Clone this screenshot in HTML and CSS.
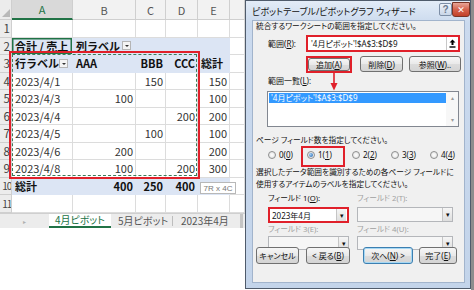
FILE: index.html
```html
<!DOCTYPE html>
<html lang="ja">
<head>
    <meta charset="UTF-8">
    <title>ピボットテーブル ウィザード</title>
    <link rel="stylesheet" href="styles.css">
</head>
<body>
<div class="screen">

    <div class="excel">
        <div class="sheet">
            <div class="row head">
                <div class="rh corner"><span class="tri"></span></div>
                <div class="ch sel">A</div><div class="ch">B</div><div class="ch">C</div><div class="ch">D</div><div class="ch">E</div><div class="ch"></div>
            </div>
            <div class="row">
                <div class="rh">1</div><div class="c"></div><div class="c"></div><div class="c"></div><div class="c"></div><div class="c"></div><div class="c"></div>
            </div>
            <div class="row">
                <div class="rh">2</div>
                <div class="c pv b active">合計 / 売上</div>
                <div class="c pv b">列ラベル<span class="filter"></span></div>
                <div class="c pv"></div><div class="c pv"></div><div class="c pv"></div><div class="c"></div>
            </div>
            <div class="row">
                <div class="rh">3</div>
                <div class="c pv b">行ラベル<span class="filter"></span></div>
                <div class="c pv b">AAA</div>
                <div class="c pv b n">BBB</div>
                <div class="c pv b n">CCC</div>
                <div class="c pv b">総計</div><div class="c"></div>
            </div>
            <div class="row">
                <div class="rh">4</div><div class="c">2023/4/1</div><div class="c n"></div><div class="c n">150</div><div class="c n"></div><div class="c n">150</div><div class="c"></div>
            </div>
            <div class="row">
                <div class="rh">5</div><div class="c">2023/4/3</div><div class="c n">100</div><div class="c n"></div><div class="c n"></div><div class="c n">100</div><div class="c"></div>
            </div>
            <div class="row">
                <div class="rh">6</div><div class="c">2023/4/4</div><div class="c n"></div><div class="c n"></div><div class="c n">200</div><div class="c n">200</div><div class="c"></div>
            </div>
            <div class="row">
                <div class="rh">7</div><div class="c">2023/4/5</div><div class="c n"></div><div class="c n">100</div><div class="c n"></div><div class="c n">100</div><div class="c"></div>
            </div>
            <div class="row">
                <div class="rh">8</div><div class="c">2023/4/6</div><div class="c n">200</div><div class="c n"></div><div class="c n"></div><div class="c n">200</div><div class="c"></div>
            </div>
            <div class="row">
                <div class="rh">9</div><div class="c">2023/4/8</div><div class="c n">100</div><div class="c n"></div><div class="c n">200</div><div class="c n">300</div><div class="c"></div>
            </div>
            <div class="row">
                <div class="rh wide">10</div>
                <div class="c pv b">総計</div><div class="c pv b n">400</div><div class="c pv b n">250</div><div class="c pv b n">400</div><div class="c pv b n"></div><div class="c"></div>
            </div>
            <div class="row">
                <div class="rh wide">11</div><div class="c"></div><div class="c"></div><div class="c"></div><div class="c"></div><div class="c"></div><div class="c"></div>
            </div>

            <!-- annotations over the grid -->
            <div class="marquee"></div>
            <div class="ants"></div>
            <div class="tip">7R x 4C</div>
        </div>

        <div class="tabs">
            <div class="tab-nav">&#9656;</div>
            <div class="tab on">4月ピボット</div>
            <div class="tab second">5月ピボット</div>
            <div class="tab third">2023年4月</div>
        </div>
    </div>

    <div class="dialog">
        <div class="titlebar">
            <span class="title">ピボットテーブル/ピボットグラフ ウィザード</span>
            <span class="help">?</span>
            <span class="close">✕</span>
        </div>

        <div class="panel">
            <p class="msg">統合するワークシートの範囲を指定してください。</p>

            <div class="range">
                <label>範囲(<u>R</u>):</label>
                <div class="input red">
                    <span class="val">'4月ピボット'!$A$3:$D$9</span>
                    <span class="pick">
                        <svg width="7" height="9" viewBox="0 0 7 9"><path d="M3.5 0.5 L6.5 3.5 H4.5 V6 H2.5 V3.5 H0.5 Z" fill="#000"/><rect x="0.5" y="7.3" width="6" height="1.4" fill="#000"/></svg>
                    </span>
                </div>
            </div>

            <div class="btns">
                <span class="red btn-mark"><button>追加(<u>A</u>)</button></span>
                <button class="w43">削除(<u>D</u>)</button>
                <button class="w52">参照(<u>W</u>)..</button>
            </div>

            <label class="lbl-list">範囲一覧(<u>L</u>):</label>
            <div class="list">
                <div class="items"><div class="item on">'4月ピボット'!$A$3:$D$9</div></div>
                <div class="vscroll"><span>&#9652;</span><span>&#9662;</span></div>
            </div>

            <p class="msg msg2">ページ フィールド数を指定してください。</p>
            <div class="radios">
                <span class="opt w39"><i class="radio"></i><span>0(<u>0</u>)</span></span>
                <span class="opt w45 picked"><i class="radio on"></i><span>1(<u>1</u>)</span></span>
                <span class="opt w39"><i class="radio"></i><span>2(<u>2</u>)</span></span>
                <span class="opt w39"><i class="radio"></i><span>3(<u>3</u>)</span></span>
                <span class="opt"><i class="radio"></i><span>4(<u>4</u>)</span></span>
            </div>

            <p class="msg msg3">選択したデータ範囲を識別するための各ページ フィールドに<br>使用するアイテムのラベルを指定してください。</p>

            <div class="fields">
                <label>フィールド 1(<u>O</u>):</label>
                <label class="off">フィールド 2(T):</label>
                <div class="combo red"><span class="val">2023年4月</span><span class="drop">&#9662;</span></div>
                <div class="combo dis"><span class="val"></span><span class="drop">&#9662;</span></div>
                <label class="off lbl2">フィールド 3(E):</label>
                <label class="off lbl2">フィールド 4(U):</label>
                <div class="combo dis short"><span class="val"></span><span class="drop">&#9662;</span></div>
                <div class="combo dis short"><span class="val"></span><span class="drop">&#9662;</span></div>
            </div>

            <div class="footer">
                <button class="w43">キャンセル</button>
                <button class="w44">&lt; 戻る(<u>B</u>)</button>
                <button class="w50 focus">次へ(<u>N</u>) &gt;</button>
                <button class="w38">完了(<u>E</u>)</button>
            </div>

            <svg class="arrow" width="8" height="19" viewBox="0 0 8 19">
                <line x1="4" y1="0" x2="4" y2="13" stroke="#e0202a" stroke-width="1.6"/>
                <path d="M0.5 11 L7.5 11 L4 18.5 Z" fill="#e0202a"/>
            </svg>
        </div>
    </div>

    <div class="edge"></div>
</div>
</body>
</html>
```

FILE: styles.css
```css
*{
    box-sizing: border-box;
}

body{
    margin: 0;
    width: 474px;
    height: 290px;
    overflow: hidden;
    background-color: white;
    font-family: "Noto Sans CJK JP", "Noto Sans", sans-serif;
}

.screen{
    display: flex;
    height: 290px;
}

/* ---------- spreadsheet ---------- */

.excel{
    width: 245px;
    flex: none;
    overflow: hidden;
}

.sheet{
    position: relative;
}

.row{
    display: grid;
    grid-template-columns: 12px 61px 63px 30px 32px 32px 15px;
    height: 17.5px;
}

.row.head{
    height: 20px;
}

.rh, .ch{
    background-color: #ececec;
    color: #555;
    font-size: 11px;
    display: flex;
    align-items: center;
    border-right: 1px solid #cfcfcf;
    border-bottom: 1px solid #cfcfcf;
    overflow: hidden;
}

.ch{
    justify-content: center;
    background-color: #f2f2f2;
}

.ch.sel{
    background-color: #d9d9d9;
    color: #217346;
    border-bottom: 2px solid #217346;
}

.rh{
    justify-content: flex-end;
    padding-right: 1px;
    font-size: 11.5px;
    color: #444;
}

.rh.wide{
    font-size: 10px;
    letter-spacing: -1.2px;
    padding-right: 0;
}

.corner{
    position: relative;
}

.tri{
    position: absolute;
    right: 1px;
    bottom: 2px;
    border-left: 8px solid transparent;
    border-bottom: 8px solid #b9b9b9;
}

.c{
    font-size: 11px;
    color: #333;
    display: flex;
    align-items: center;
    padding: 0 2px 0 3px;
    white-space: nowrap;
    border-right: 1px solid #dcdcdc;
    border-bottom: 1px solid #dcdcdc;
}

.c.n{
    justify-content: flex-end;
}

.c.b{
    font-weight: bold;
    color: #111;
}

.c.pv{
    background-color: #dce5f4;
    border-color: #dce5f4;
}

.c.active{
    box-shadow: inset 0 0 0 1.5px #217346;
}

.filter{
    width: 9px;
    height: 9px;
    margin-left: auto;
    margin-right: 2px;
    background-color: #f4f4f4;
    border: 1px solid #b5b5b5;
    position: relative;
}

.filter::after{
    content: "";
    position: absolute;
    left: 2px;
    top: 3px;
    border-left: 2px solid transparent;
    border-right: 2px solid transparent;
    border-top: 2px solid #333;
}

.marquee{
    position: absolute;
    left: 9px;
    top: 51px;
    width: 191px;
    height: 128px;
    border: 2px solid #e0202a;
}

.ants{
    position: absolute;
    left: 12px;
    top: 54px;
    width: 185px;
    height: 122px;
    border: 1.5px dashed #3c7a57;
}

.tip{
    position: absolute;
    left: 200px;
    top: 182px;
    width: 36px;
    height: 12px;
    background-color: white;
    border: 1px solid #b8b8b8;
    font-family: "Liberation Sans", sans-serif;
    font-size: 8px;
    color: #777;
    display: flex;
    align-items: center;
    justify-content: center;
}

.tabs{
    display: flex;
    align-items: stretch;
    height: 15px;
    margin-top: 0.5px;
    background-color: #ececec;
    border-top: 1px solid #cfcfcf;
    font-size: 10px;
    font-feature-settings: "palt";
    color: #555;
    white-space: nowrap;
}

.tab-nav{
    width: 49px;
    flex: none;
    font-size: 6px;
    color: #b0b0b0;
    display: flex;
    align-items: center;
    justify-content: center;
}

.tab{
    display: flex;
    align-items: center;
    flex: none;
    line-height: 1;
}

.tab.on{
    width: 62px;
    background-color: white;
    color: #217346;
    border-bottom: 2px solid #217346;
    justify-content: center;
}

.tab.second{
    width: 62px;
    padding-left: 7px;
    border-right: 1px solid #bdbdbd;
    margin: 2px 0;
}

.tab.third{
    width: 70px;
    padding-left: 8px;
    border-right: 3px solid #c4c4c4;
}

/* ---------- dialog ---------- */

.dialog{
    width: 226px;
    height: 289px;
    flex: none;
    border: 1px solid #4f5b6b;
    background: linear-gradient(#e3ecf7, #cbdaee 22px, #c3d4ea);
    padding: 0 5px 0 6px;
    font-family: "Noto Sans", "Noto Sans CJK JP", sans-serif;
    font-size: 7.7px;
    font-feature-settings: "palt";
    color: #111;
}

.edge{
    flex: 1;
    background-color: #8d8d8d;
}

.titlebar{
    height: 19px;
    display: flex;
    align-items: flex-start;
}

.title{
    font-size: 9px;
    margin-top: 4px;
    white-space: nowrap;
}

.help{
    margin-left: auto;
    margin-top: 2px;
    width: 13px;
    height: 13px;
    border: 1px solid #7d8ea6;
    border-radius: 2px;
    background: linear-gradient(#eef3fa, #c9d6e8);
    color: #6b7a90;
    font-family: "Liberation Sans", sans-serif;
    font-weight: bold;
    font-size: 10px;
    display: flex;
    align-items: center;
    justify-content: center;
}

.close{
    width: 18px;
    height: 15px;
    margin-top: 1px;
    margin-right: -5px;
    border: 1px solid #7a3426;
    border-radius: 0 0 3px 3px;
    background: linear-gradient(#e8a597, #d5634d 50%, #c24028);
    color: white;
    font-family: "DejaVu Sans", sans-serif;
    font-weight: bold;
    font-size: 9px;
    display: flex;
    align-items: center;
    justify-content: center;
}

.panel{
    position: relative;
    height: 263px;
    background-color: #f0f0f0;
    border: 1px solid #a2b4cc;
}

.msg{
    margin: 0 0 0 3px;
    height: 10px;
    line-height: 10px;
    white-space: nowrap;
}

label{
    display: block;
    white-space: nowrap;
    line-height: 10px;
}

u{
    text-decoration-thickness: 0.5px;
    text-underline-offset: 1px;
}

.range{
    display: flex;
    align-items: center;
    margin-top: 4px;
    height: 17px;
    padding-left: 15px;
    font-size: 8px;
}

.range label{
    width: 38px;
}

.red{
    border: 2px solid #e0202a;
}

.input{
    width: 154px;
    height: 17px;
    background-color: white;
    display: flex;
    align-items: center;
    padding-left: 3px;
}

.val{
    flex: 1;
    white-space: nowrap;
}

.pick{
    width: 12px;
    height: 13px;
    border-left: 1px solid #c8c8c8;
    display: flex;
    align-items: center;
    justify-content: center;
}

button{
    font-family: inherit;
    font-feature-settings: "palt";
    font-size: 8px;
    color: #111;
    height: 16px;
    padding: 0;
    border: 1px solid #707070;
    border-radius: 3px;
    background: linear-gradient(#f6f6f6, #e9e9e9 50%, #dcdcdc 51%, #d4d4d4);
    white-space: nowrap;
}

.btns{
    display: flex;
    align-items: center;
    margin-top: 4px;
    height: 16px;
    padding-left: 53px;
    gap: 6px;
}

.btn-mark{
    width: 46px;
    height: 17px;
    display: flex;
    padding: 0;
}

.btn-mark button{
    width: 100%;
    height: 100%;
}

.btns .w43{
    margin-left: 2px;
}

.w38{ width: 38px; }
.w43{ width: 43px; }
.w44{ width: 44px; }
.w50{ width: 50px; }
.w52{ width: 52px; }

.lbl-list{
    margin-top: 3px;
    height: 11px;
    padding-left: 15px;
    line-height: 11px;
    font-size: 8px;
}

.list{
    margin-top: 5px;
    margin-left: 14px;
    width: 192px;
    height: 36px;
    background-color: white;
    border: 1px solid #828790;
    display: flex;
}

.items{
    flex: 1;
    padding: 1px 0 0 1px;
}

.item{
    height: 10px;
    line-height: 10px;
    padding-left: 2px;
    white-space: nowrap;
    font-size: 8px;
}

.item.on{
    background-color: #3399ff;
    color: white;
}

.vscroll{
    width: 12px;
    display: flex;
    flex-direction: column;
    justify-content: space-between;
    align-items: center;
    color: #9a9a9a;
    font-size: 6px;
    padding: 2px 0;
    background-color: #f7f7f7;
}

.msg2{
    margin-top: 8px;
}

.radios{
    display: flex;
    align-items: center;
    margin-top: 1px;
    height: 17px;
    padding-left: 15px;
    font-size: 8px;
}

.opt{
    display: flex;
    align-items: center;
    gap: 2px;
    position: relative;
    height: 17px;
}

.w39{ width: 39px; }
.w45{ width: 45px; }

.opt.picked::after{
    content: "";
    position: absolute;
    left: -6px;
    top: 0;
    width: 40px;
    height: 17px;
    border: 2px solid #e0202a;
}

.radio{
    width: 8px;
    height: 8px;
    border-radius: 50%;
    border: 1px solid #8e8f8f;
    background: radial-gradient(#ffffff, #dcdcdc);
    margin-right: 1px;
    display: flex;
    align-items: center;
    justify-content: center;
}

.radio.on::after{
    content: "";
    width: 4px;
    height: 4px;
    border-radius: 50%;
    background: radial-gradient(circle at 35% 35%, #9fd0f5, #1d5aa8);
}

.msg3{
    margin-top: 3px;
    height: 24px;
    line-height: 12px;
}

.fields{
    display: grid;
    grid-template-columns: 81px 96px;
    column-gap: 8px;
    grid-template-rows: 10px 16px 10px 14px;
    margin-top: 3px;
    padding-left: 15px;
}

.off{
    color: #a0a0a0;
}

.lbl2{
    margin-top: 5px;
}

.combo{
    margin-top: 4px;
    height: 16px;
    display: flex;
    align-items: center;
    background-color: white;
    padding-left: 2px;
    font-size: 8px;
}

.combo.dis{
    border: 1px solid #b4b6ba;
    background-color: #f6f6f6;
    height: 15px;
}

.combo.short{
    margin-top: 7px;
    height: 14px;
}

.fields .combo.short:first-of-type{
    width: 78px;
}

.drop{
    width: 10px;
    height: 100%;
    border-left: 1px solid #c5c5c5;
    background: linear-gradient(#f6f6f6, #dedede);
    font-size: 7px;
    color: #111;
    display: flex;
    align-items: center;
    justify-content: center;
}

.combo.red .drop{
    height: 12px;
    margin-right: 1px;
}

.footer{
    display: flex;
    align-items: center;
    margin-top: 4px;
    height: 17px;
    padding-left: 3px;
    gap: 7px;
}

.footer button{
    height: 17px;
}

.footer .w50{
    margin-left: 6px;
}

.footer .w38{
    margin-left: -1px;
}

.focus{
    border-color: #3c7fb1;
    box-shadow: inset 0 0 0 1px #a6d8f4;
}

.arrow{
    position: absolute;
    left: 77px;
    top: 51px;
}
```
